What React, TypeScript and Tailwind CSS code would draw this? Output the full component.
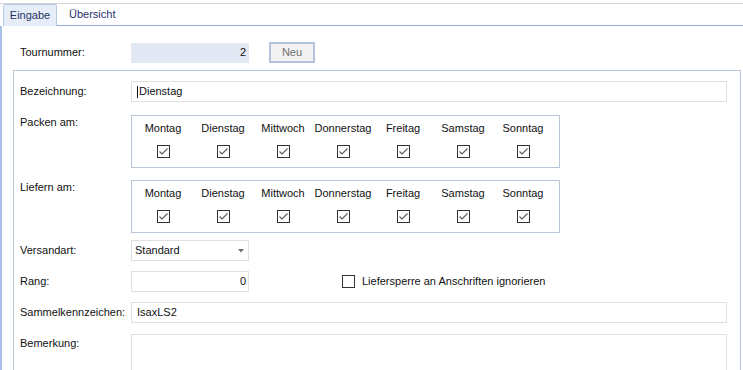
import React from "react";

const days = ["Montag", "Dienstag", "Mittwoch", "Donnerstag", "Freitag", "Samstag", "Sonntag"];

function Check({ checked }: { checked: boolean }) {
  return (
    <svg width="13" height="13" viewBox="0 0 13 13" className="block">
      <rect x="0.5" y="0.5" width="12" height="12" fill="#ffffff" stroke="#333333" />
      {checked && (
        <polyline points="2.5,6.5 5,9 10.5,3.5" fill="none" stroke="#5a5a5a" strokeWidth="1.1" />
      )}
    </svg>
  );
}

function DayBox() {
  return (
    <div className="flex h-[53px] w-[429px] border border-[#b9c6d8] pl-px">
      {days.map((d) => (
        <div key={d} className="flex w-[60px] flex-col items-center pt-[5px]">
          <span className="leading-[14px] text-[#111]">{d}</span>
          <div className="mt-[10px]">
            <Check checked />
          </div>
        </div>
      ))}
    </div>
  );
}

export default function App() {
  return (
    <div
      className="relative h-[370px] w-[743px] overflow-hidden bg-white text-[11px] text-[#111]"
      style={{ fontFamily: '"Liberation Sans", Arial, sans-serif' }}
    >
      <div className="h-[3px]" />
      <div className="h-px bg-[#d4d4d4]" />
      {/* tab strip */}
      <div className="flex h-[22px] items-stretch">
        <div className="ml-[3px] flex w-[54px] items-center justify-center rounded-t-[2px] border border-b-0 border-[#b7cae4] bg-[#e6edf8] text-[#1d3462]">
          Eingabe
        </div>
        <div className="flex flex-1 flex-col">
          <div className="flex flex-1 items-center pl-[12px] text-[#27306e]">Übersicht</div>
          <div className="h-px bg-[#8eaee0]" />
        </div>
      </div>
      {/* content */}
      <div className="h-[345px] border-l-2 border-[#a9c0e8]">
        <div className="flex h-[16px]" />
        <div className="flex h-[21px] items-center pl-[18px]">
          <span className="w-[111px]">Tournummer:</span>
          <div className="flex h-[20px] w-[118px] items-center justify-end bg-[#e2e8f3] pr-[3px]">2</div>
          <div className="ml-[20px] flex h-[21px] w-[46px] items-center justify-center border-2 border-[#b3c3dc] bg-[#f3f3f3] text-[#6e6e6e]">
            Neu
          </div>
        </div>
        {/* group box */}
        <div className="ml-[11px] mt-[7px] h-[400px] w-[728px] border border-[#b9c6d6] pl-[6px] pt-[10px]">
          <div className="flex h-[21px] items-center">
            <span className="w-[111px]">Bezeichnung:</span>
            <div className="flex h-[21px] w-[596px] items-center border border-[#e0e0e0] pl-[5px]">
              <span className="mr-px inline-block h-[12px] w-px bg-[#111]" />
              Dienstag
            </div>
          </div>
          <div className="mt-[13px] flex items-start">
            <span className="w-[111px] leading-[14px]">Packen am:</span>
            <DayBox />
          </div>
          <div className="mt-[12px] flex items-start">
            <span className="w-[111px] leading-[14px]">Liefern am:</span>
            <DayBox />
          </div>
          <div className="mt-[7px] flex h-[21px] items-center">
            <span className="w-[111px]">Versandart:</span>
            <div className="flex h-[21px] w-[118px] items-center justify-between border border-[#e0e0e0] pl-[3px] pr-[4px]">
              <span>Standard</span>
              <svg width="6" height="4" viewBox="0 0 6 4">
                <polygon points="0,0 6,0 3,3.5" fill="#707070" />
              </svg>
            </div>
          </div>
          <div className="mt-[10px] flex h-[21px] items-center">
            <span className="w-[111px]">Rang:</span>
            <div className="flex h-[21px] w-[118px] items-center justify-end border border-[#e0e0e0] pr-[2px]">0</div>
            <div className="ml-[93px] flex items-center">
              <Check checked={false} />
              <span className="ml-[7px]">Liefersperre an Anschriften ignorieren</span>
            </div>
          </div>
          <div className="mt-[10px] flex h-[21px] items-center">
            <span className="w-[111px]">Sammelkennzeichen:</span>
            <div className="flex h-[21px] w-[596px] items-center border border-[#e0e0e0] pl-[5px]">IsaxLS2</div>
          </div>
          <div className="mt-[11px] flex items-start">
            <span className="w-[111px] pt-[2px] leading-[14px]">Bemerkung:</span>
            <div className="h-[60px] w-[596px] border border-[#e0e0e0]" />
          </div>
        </div>
      </div>
    </div>
  );
}
